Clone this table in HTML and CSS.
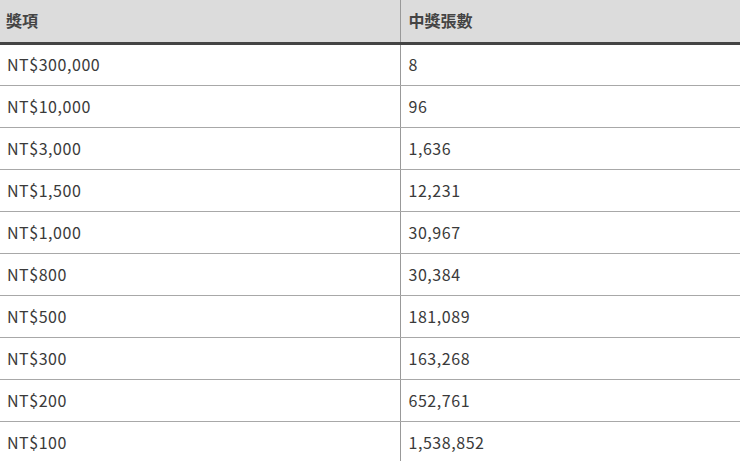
FILE: index.html
```html
<!DOCTYPE html>
<html lang="zh-Hant">
<head>
<meta charset="utf-8">
<link rel="stylesheet" href="styles.css">
</head>
<body>
<table class="prize-table">
  <thead>
    <tr><th class="col-prize">獎項</th><th>中獎張數</th></tr>
  </thead>
  <tbody>
    <tr><td class="col-prize">NT$300,000</td><td>8</td></tr>
    <tr><td class="col-prize">NT$10,000</td><td>96</td></tr>
    <tr><td class="col-prize">NT$3,000</td><td>1,636</td></tr>
    <tr><td class="col-prize">NT$1,500</td><td>12,231</td></tr>
    <tr><td class="col-prize">NT$1,000</td><td>30,967</td></tr>
    <tr><td class="col-prize">NT$800</td><td>30,384</td></tr>
    <tr><td class="col-prize">NT$500</td><td>181,089</td></tr>
    <tr><td class="col-prize">NT$300</td><td>163,268</td></tr>
    <tr><td class="col-prize">NT$200</td><td>652,761</td></tr>
    <tr><td class="col-prize">NT$100</td><td>1,538,852</td></tr>
  </tbody>
</table>
</body>
</html>
```
FILE: styles.css
```css
html, body {
  margin: 0;
  padding: 0;
  background: #fff;
}
body {
  font-family: "Noto Sans CJK TC", "Noto Sans", sans-serif;
  color: #3a3a3a;
}
.prize-table {
  width: 100%;
  border-collapse: collapse;
  table-layout: fixed;
}
.prize-table th {
  height: 43px;
  box-sizing: border-box;
  background: #dcdcdc;
  color: #444;
  font-weight: 700;
  font-size: 16px;
  text-align: left;
  padding: 0 8px 2px;
  border-bottom: 3px solid #444;
  vertical-align: middle;
}
.prize-table td {
  height: 42px;
  box-sizing: border-box;
  font-size: 16px;
  font-weight: 400;
  letter-spacing: 0.55px;
  padding: 0 8px 1px;
  border-bottom: 1px solid #a8a8a8;
  vertical-align: middle;
}
.prize-table .col-prize {
  width: 400px;
  padding-left: 7px;
  border-right: 1px solid #999;
}
.prize-table th.col-prize {
  padding-left: 6px;
}
```
